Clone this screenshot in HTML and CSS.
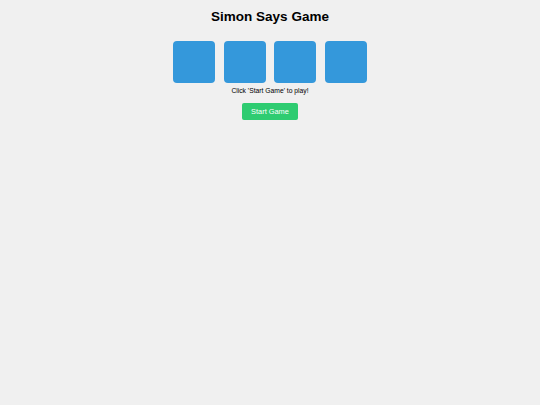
FILE: index.html
```html
<!DOCTYPE html>
<html>
<head>
<meta charset="utf-8">
<title>Simon Says Game</title>
<link rel="stylesheet" href="styles.css">
</head>
<body>
<h1 class="title">Simon Says Game</h1>
<div class="board">
  <div class="pad"></div>
  <div class="pad"></div>
  <div class="pad"></div>
  <div class="pad"></div>
</div>
<p class="message">Click 'Start Game' to play!</p>
<button class="start">Start Game</button>
</body>
</html>
```
FILE: styles.css
```css
html, body {
  margin: 0;
  padding: 0;
  background: #f0f0f0;
}
body {
  font-family: "Liberation Sans", Arial, sans-serif;
  display: flex;
  flex-direction: column;
  align-items: center;
  padding-top: 9px;
}
.title {
  font-size: 13.5px;
  line-height: 16px;
  font-weight: bold;
  margin: 0;
  color: #000;
}
.board {
  display: flex;
  gap: 8.5px;
  margin-top: 16px;
}
.pad {
  width: 42px;
  height: 42px;
  background: #3498db;
  border-radius: 4px;
}
.message {
  font-size: 6.75px;
  line-height: 8px;
  margin: 4px 0 0;
  color: #000;
}
.start {
  margin-top: 8px;
  width: 56px;
  height: 17px;
  padding: 0;
  border: none;
  border-radius: 2px;
  background: #2ecc71;
  color: #fff;
  font-family: "Liberation Sans", Arial, sans-serif;
  font-size: 7.4px;
}
```
